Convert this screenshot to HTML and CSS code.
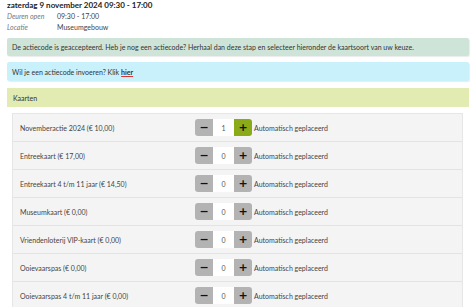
FILE: index.html
```html
<!DOCTYPE html>
<html lang="nl">
  <head>
    <meta charset="UTF-8" />
    <meta name="viewport" content="width=device-width, initial-scale=1.0" />
    <title>Kaarten</title>
    <link rel="stylesheet" href="styles.css">
  </head>
  <body>
    <div class="Page">
      <h1 class="EventTitle">zaterdag 9 november 2024 09:30 - 17:00</h1>
      <div class="Details">
        <span class="DetailLabel">Deuren open</span><span>09:30 - 17:00</span>
        <span class="DetailLabel">Locatie</span><span>Museumgebouw</span>
      </div>

      <div class="Alert Success">De actiecode is geaccepteerd. Heb je nog een actiecode? Herhaal dan deze stap en selecteer hieronder de kaartsoort van uw keuze.</div>
      <div class="Alert Info">Wil je een actiecode invoeren? Klik <a class="Here" href="#">hier</a></div>

      <div class="SectionHead">Kaarten</div>

      <div class="Tickets">
        <div class="Ticket">
          <span class="TicketName">Novemberactie 2024 (&euro; 10,00)</span>
          <div class="Stepper">
            <button class="Step Minus">&minus;</button>
            <input class="Count" type="text" value="1" />
            <button class="Step Plus Active">+</button>
          </div>
          <span class="Place">Automatisch geplaceerd</span>
        </div>
        <div class="Ticket">
          <span class="TicketName">Entreekaart (&euro; 17,00)</span>
          <div class="Stepper">
            <button class="Step Minus">&minus;</button>
            <input class="Count" type="text" value="0" />
            <button class="Step Plus">+</button>
          </div>
          <span class="Place">Automatisch geplaceerd</span>
        </div>
        <div class="Ticket">
          <span class="TicketName">Entreekaart 4 t/m 11 jaar (&euro; 14,50)</span>
          <div class="Stepper">
            <button class="Step Minus">&minus;</button>
            <input class="Count" type="text" value="0" />
            <button class="Step Plus">+</button>
          </div>
          <span class="Place">Automatisch geplaceerd</span>
        </div>
        <div class="Ticket">
          <span class="TicketName">Museumkaart (&euro; 0,00)</span>
          <div class="Stepper">
            <button class="Step Minus">&minus;</button>
            <input class="Count" type="text" value="0" />
            <button class="Step Plus">+</button>
          </div>
          <span class="Place">Automatisch geplaceerd</span>
        </div>
        <div class="Ticket">
          <span class="TicketName">Vriendenloterij VIP-kaart (&euro; 0,00)</span>
          <div class="Stepper">
            <button class="Step Minus">&minus;</button>
            <input class="Count" type="text" value="0" />
            <button class="Step Plus">+</button>
          </div>
          <span class="Place">Automatisch geplaceerd</span>
        </div>
        <div class="Ticket">
          <span class="TicketName">Ooievaarspas (&euro; 0,00)</span>
          <div class="Stepper">
            <button class="Step Minus">&minus;</button>
            <input class="Count" type="text" value="0" />
            <button class="Step Plus">+</button>
          </div>
          <span class="Place">Automatisch geplaceerd</span>
        </div>
        <div class="Ticket">
          <span class="TicketName">Ooievaarspas 4 t/m 11 jaar (&euro; 0,00)</span>
          <div class="Stepper">
            <button class="Step Minus">&minus;</button>
            <input class="Count" type="text" value="0" />
            <button class="Step Plus">+</button>
          </div>
          <span class="Place">Automatisch geplaceerd</span>
        </div>
      </div>
    </div>
  </body>
</html>
```
FILE: styles.css
```css
* {
  box-sizing: border-box;
}
body {
  margin: 0;
  font-family: Lato, "Noto Sans", sans-serif;
  font-size: 7px;
  color: #333;
  background-color: white;
}
.Page {
  padding: 0 6px 0 7px;
}
.EventTitle {
  margin: 0;
  font-size: 8px;
  font-weight: bold;
  line-height: 11px;
  color: #222;
}
.Details {
  display: grid;
  grid-template-columns: 50px auto;
  row-gap: 1px;
  line-height: 10px;
  margin-top: 0;
  color: #444;
}
.DetailLabel {
  font-style: italic;
  color: #777;
}
.Alert {
  padding: 0 5px;
  height: 19px;
  display: flex;
  align-items: center;
  border-radius: 2px;
  box-shadow: 1px 1px 1px rgba(0, 0, 0, 0.08);
}
.Success {
  margin-top: 6px;
  background-color: #cfe4d8;
  height: 18px;
}
.Info {
  margin-top: 6px;
  background-color: #c9f1fb;
}
.Here {
  margin-left: 2px;
  color: #333;
  font-weight: bold;
  text-decoration: underline;
  text-decoration-color: #d33;
}
.SectionHead {
  margin-top: 7px;
  height: 19px;
  padding: 0 6px;
  display: flex;
  align-items: center;
  background-color: #e2ecb2;
  color: #333;
}
.Tickets {
  margin: 6px 6px 0 5px;
  background-color: #f4f4f4;
  border: 1px solid #e6e6e6;
  border-bottom: none;
}
.Ticket {
  display: grid;
  grid-template-columns: 175px 59px auto;
  align-items: center;
  height: 28px;
  padding-left: 7px;
  border-bottom: 1px solid #e3e3e3;
}
.TicketName {
  color: #444;
}
.Stepper {
  display: flex;
  height: 17px;
}
.Step {
  width: 18px;
  height: 17px;
  padding: 0;
  border: none;
  background-color: #b3b3b3;
  color: #111;
  font-family: "DejaVu Sans", sans-serif;
  font-size: 11px;
  font-weight: bold;
  line-height: 17px;
}
.Minus {
  border-radius: 3px 0 0 3px;
}
.Plus {
  border-radius: 0 3px 3px 0;
}
.Plus.Active {
  background-color: #8aab17;
}
.Count {
  width: 21px;
  height: 17px;
  padding: 0;
  border: none;
  text-align: center;
  font-family: Lato, sans-serif;
  font-size: 7px;
  color: #555;
  background-color: white;
}
.Place {
  color: #444;
}
```
